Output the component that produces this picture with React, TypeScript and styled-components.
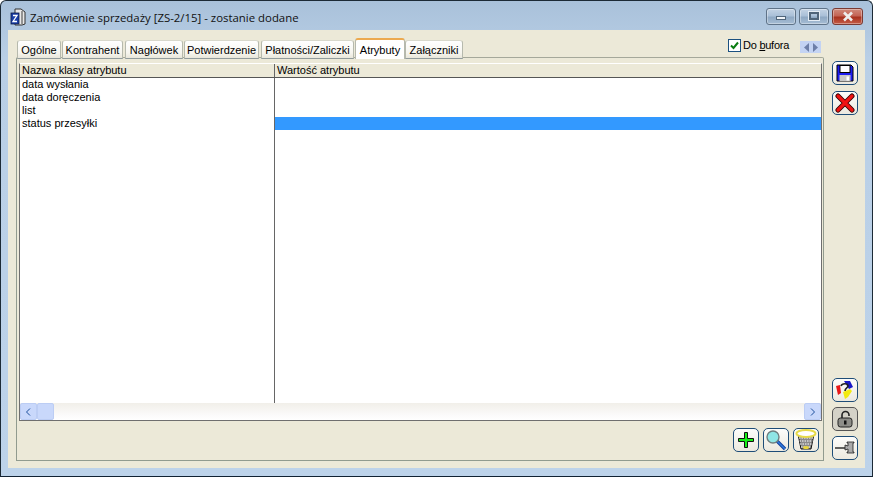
import React from "react";
import styled, { createGlobalStyle } from "styled-components";

const Global = createGlobalStyle`
  html, body { margin: 0; padding: 0; width: 873px; height: 477px; overflow: hidden; background: #fff; }
  * { box-sizing: border-box; }
`;

const Win = styled.div`
  width: 873px; height: 477px; display: flex; flex-direction: column;
  background: linear-gradient(180deg, #a9c1da 0%, #b9cfe6 12%, #bdd3ea 100%);
  border: 1px solid #1c2a36; border-bottom-color: #123; border-radius: 6px 6px 0 0;
  font-family: "Liberation Sans", Arial, sans-serif;
  font-size: 11px; color: #000;
`;
const TitleBar = styled.div`
  height: 29px; display: flex; align-items: center; padding: 3px 9px 0 9px; flex: none;
`;
const AppIcon = styled.svg` width: 16px; height: 18px; margin-right: 4px; flex: none; `;
const Title = styled.div`
  flex: 1; font-family: "Open Sans", sans-serif; font-size: 11.4px; color: #111; white-space: nowrap;
`;
const Caps = styled.div` display: flex; gap: 3px; margin-top: -2px; `;
const Cap = styled.div<{ $w: number; $close?: boolean }>`
  width: ${p => p.$w}px; height: 17px; border: 1px solid ${p => p.$close ? "#7a3a33" : "#5f7388"}; border-radius: 3px;
  display: flex; align-items: center; justify-content: center;
  background: ${p => p.$close
    ? "linear-gradient(180deg,#cf8a7c 0%,#c46455 45%,#a8321f 55%,#c55c46 100%)"
    : "linear-gradient(180deg,#c3d3e4 0%,#aac0d8 45%,#8fa9c4 55%,#a6bdd4 100%)"};
  box-shadow: inset 0 0 0 1px rgba(255,255,255,.35);
`;
const MinGlyph = styled.div` width: 10px; height: 4px; background: #f0f4f8; border: 1px solid #50657a; margin-top: 4px; `;
const MaxGlyph = styled.div` width: 10px; height: 8px; background: transparent; border: 2px solid #50657a; box-shadow: 0 0 0 1px #e5edf5; `;
const CloseGlyph = styled.svg` width: 14px; height: 11px; `;

const Client = styled.div`
  flex: 1; margin: 0 7px 8px 7px; background: #ece9d8; display: flex; min-height: 0;
`;
const Main = styled.div`
  width: 817px; flex: none; display: flex; flex-direction: column; padding: 8px 0 7px 8px;
`;
const TabRow = styled.div` height: 21px; display: flex; align-items: flex-end; flex: none; position: relative; z-index: 1; padding-left: 1px; `;
const Tab = styled.div<{ $w: number; $active?: boolean; $ml?: number }>`
  width: ${p => p.$w}px; margin-left: ${p => p.$ml ?? 0}px;
  height: ${p => p.$active ? 21 : 19}px; flex: none;
  display: flex; align-items: center; justify-content: center; white-space: nowrap;
  padding-top: ${p => p.$active ? 0 : 1}px;
  background: ${p => p.$active ? "#fff" : "linear-gradient(180deg,#fff 0%,#f6f5ee 70%,#e8e6da 100%)"};
  border: 1px solid #b6b9ad; border-bottom: ${p => p.$active ? "none" : "1px solid #919b9c"};
  border-top: ${p => p.$active ? "2px solid #eca94f" : "1px solid #d8d8cc"};
  border-radius: 3px 3px 0 0;
`;
const Spacer = styled.div` flex: 1; `;
const BufferBox = styled.div`
  display: flex; align-items: center; align-self: flex-start; margin-top: -1px; margin-right: 3px; gap: 2px;
`;
const Check = styled.div`
  width: 13px; height: 13px; border: 1px solid #1c5180; background: #fff;
  display: flex; align-items: center; justify-content: center;
`;
const BufferLabel = styled.span` width: 55px; white-space: nowrap; letter-spacing: -.25px; u { text-underline-offset: 1px; } `;
const Spin = styled.div`
  width: 21px; height: 12px; background: #c3d3f3; display: flex; align-items: center; justify-content: center; gap: 2px;
  margin-top: 4px; margin-right: 1px;
`;
const Panel = styled.div`
  flex: 1; margin-top: -2px; border: 1px solid #919b8f; border-top-color: #a5a89a;
  border-radius: 2px 2px 0 0; display: flex; flex-direction: column; padding: 5px 1px 0 2px; min-height: 0; width: 808px;
`;
const Grid = styled.div`
  width: 803px; height: 358px; flex: none; border: 1px solid #6f6f6f; border-top: 1px solid #fff;
  display: flex; flex-direction: column; background: #fff;
`;
const HeadRow = styled.div`
  height: 14px; flex: none; display: grid; grid-template-columns: 254px 1fr; background: #ece9d8;
  border-bottom: 1px solid #555;
`;
const HeadCell = styled.div`
  padding-left: 2px; line-height: 13px; font-size: 11px; white-space: nowrap;
  & + & { border-left: 1px solid #666; }
`;
const Body = styled.div` flex: 1; display: grid; grid-template-columns: 254px 1fr; min-height: 0; `;
const NameCol = styled.div` display: flex; flex-direction: column; `;
const ValueCol = styled.div` border-left: 1px solid #666; display: flex; flex-direction: column; `;
const Row = styled.div<{ $sel?: boolean }>`
  height: 13px; padding-left: 2px; line-height: 12px; white-space: nowrap; background: ${p => p.$sel ? "#3399ff" : "transparent"};
`;
const HScroll = styled.div`
  height: 17px; flex: none; display: flex; align-items: stretch; padding: 0;
  background: linear-gradient(180deg,#f1efe9 0%,#fbfafa 70%,#fff 100%);
`;
const ScrollBtn = styled.div`
  width: 17px; background: #c9d8fb; border: 1px solid #bccdf4; border-radius: 2px;
  display: flex; align-items: center; justify-content: center; flex: none;
`;
const Footer = styled.div`
  flex: 1; display: flex; justify-content: flex-end; align-items: flex-start; gap: 4px; padding: 7px 3px 0 0;
`;
const Btn = styled.div<{ $gray?: boolean; $mt?: number }>`
  width: 26px; height: 24px; flex: none; border: 1px solid #1e4d78; border-radius: 5px;
  margin-top: ${p => p.$mt ?? 0}px;
  background: ${p => p.$gray ? "#d4d2c8" : "linear-gradient(180deg,#fdfdfb 0%,#ece9df 100%)"};
  ${p => p.$gray ? "border-color:#555;" : ""}
  display: flex; align-items: center; justify-content: center;
`;
const Side = styled.div`
  flex: 1; display: flex; flex-direction: column; align-items: flex-start; padding: 31px 0 8px 7px; gap: 5px;
`;
const SideGap = styled.div` flex: 1; `;

const Arrow = ({ d }: { d: string }) => (
  <svg width="9" height="10" viewBox="0 0 9 10"><path d={d} fill="none" stroke="#1c4f9c" strokeWidth="1" /></svg>
);

export default function App() {
  return (
    <Win>
      <Global />
      <TitleBar>
        <AppIcon viewBox="0 0 16 18">
          <path d="M5 1h6l4 3v12l-3 1H5z" fill="#e8e8e8" stroke="#333" />
          <path d="M12 3v13" stroke="#777" strokeWidth="1.5" />
          <rect x="1" y="5" width="8" height="11" fill="#1b3fa8" stroke="#0c1a44" strokeWidth=".8" />
          <path d="M3 7.5h4L3 13.5h4" fill="none" stroke="#fff" strokeWidth="1.3" />
        </AppIcon>
        <Title>Zamówienie sprzedaży [ZS-2/15] - zostanie dodane</Title>
        <Caps>
          <Cap $w={30}><MinGlyph /></Cap>
          <Cap $w={30}><MaxGlyph /></Cap>
          <Cap $w={31} $close>
            <CloseGlyph viewBox="0 0 14 11"><path d="M3 1.5l8 8M11 1.5l-8 8" stroke="#eee" strokeWidth="2.6" /></CloseGlyph>
          </Cap>
        </Caps>
      </TitleBar>
      <Client>
        <Main>
          <TabRow>
            <Tab $w={44}>Ogólne</Tab>
            <Tab $w={61} $ml={1}>Kontrahent</Tab>
            <Tab $w={58} $ml={2}>Nagłówek</Tab>
            <Tab $w={75} $ml={1}>Potwierdzenie</Tab>
            <Tab $w={93} $ml={2}>Płatności/Zaliczki</Tab>
            <Tab $w={50} $ml={1} $active>Atrybuty</Tab>
            <Tab $w={58}>Załączniki</Tab>
            <Spacer />
            <BufferBox>
              <Check>
                <svg width="11" height="11" viewBox="0 0 11 11"><path d="M2 5.5l2.5 2.5L9 2.5" fill="none" stroke="#0a7d12" strokeWidth="2" /></svg>
              </Check>
              <BufferLabel>Do <u>b</u>ufora</BufferLabel>
              <Spin>
                <svg width="7" height="9" viewBox="0 0 7 9"><path d="M6 0v9L1 4.5z" fill="#6d7fa8" /></svg>
                <svg width="7" height="9" viewBox="0 0 7 9"><path d="M1 0v9l5-4.5z" fill="#6d7fa8" /></svg>
              </Spin>
            </BufferBox>
          </TabRow>
          <Panel>
            <Grid>
              <HeadRow>
                <HeadCell>Nazwa klasy atrybutu</HeadCell>
                <HeadCell>Wartość atrybutu</HeadCell>
              </HeadRow>
              <Body>
                <NameCol>
                  <Row>data wysłania</Row>
                  <Row>data doręczenia</Row>
                  <Row>list</Row>
                  <Row>status przesyłki</Row>
                </NameCol>
                <ValueCol>
                  <Row />
                  <Row />
                  <Row />
                  <Row $sel />
                </ValueCol>
              </Body>
              <HScroll>
                <ScrollBtn><Arrow d="M6 1.5L2.5 5 6 8.5" /></ScrollBtn>
                <ScrollBtn />
                <Spacer />
                <ScrollBtn><Arrow d="M3 1.5L6.5 5 3 8.5" /></ScrollBtn>
              </HScroll>
            </Grid>
            <Footer>
              <Btn>
                <svg width="20" height="20" viewBox="0 0 20 20"><path d="M8.5 2.5h3v6h6v3h-6v6h-3v-6h-6v-3h6z" fill="#17f017" stroke="#111" /></svg>
              </Btn>
              <Btn>
                <svg width="22" height="22" viewBox="0 0 22 22">
                  <path d="M12 12l8 8" stroke="#123f9a" strokeWidth="3.4" />
                  <path d="M12 12l8 8" stroke="#2f7ce0" strokeWidth="1.4" />
                  <circle cx="8" cy="8" r="6" fill="#8fe6e6" stroke="#6f7f80" strokeWidth="1.4" />
                </svg>
              </Btn>
              <Btn>
                <svg width="24" height="22" viewBox="0 0 24 22">
                  <path d="M4 5l3 15h10l3-15" fill="#8a8a8a" stroke="#111" />
                  <path d="M5 9l14 0M5.5 12h13M6 15h12M7 18h10" stroke="#fff" strokeWidth="1" strokeDasharray="1.5 1" />
                  <ellipse cx="12" cy="4.5" rx="9.5" ry="3.5" fill="#fff" stroke="#e6da4a" strokeWidth="2" />
                  <ellipse cx="12" cy="18.5" rx="3" ry="1.5" fill="#e9d63a" />
                </svg>
              </Btn>
            </Footer>
          </Panel>
        </Main>
        <Side>
          <Btn>
            <svg width="18" height="18" viewBox="0 0 18 18">
              <path d="M1 1h14l2 2v14H1z" fill="#1c1cf0" stroke="#000" />
              <rect x="4" y="1.5" width="10" height="7" fill="#fff" stroke="#000" />
              <rect x="3.5" y="11" width="11" height="6" fill="#c6c6c6" />
              <rect x="10.5" y="12.5" width="2.5" height="4" fill="#fff" />
            </svg>
          </Btn>
          <Btn $mt={1}>
            <svg width="20" height="20" viewBox="0 0 20 20"><path d="M3 3l14 14M17 3L3 17" stroke="#300" strokeWidth="5" strokeLinecap="round" /><path d="M3 3l14 14M17 3L3 17" stroke="#f01414" strokeWidth="3.2" strokeLinecap="round" /></svg>
          </Btn>
          <SideGap />
          <Btn>
            <svg width="20" height="20" viewBox="0 0 20 20">
              <path d="M1 6l4-1 1 8-3 2z" fill="#e81818" />
              <path d="M9 1h6l3 6-4 2z" fill="#1818c8" />
              <path d="M8 12l7-3 2 2-4 6-3 2z" fill="#f2ea10" />
              <path d="M6 6c1-3 7-3 7 0 0 2-3 2-3 5" fill="none" stroke="#222" strokeWidth="1.6" />
            </svg>
          </Btn>
          <Btn $gray>
            <svg width="20" height="20" viewBox="0 0 20 20">
              <path d="M7 9V6a3.5 3.5 0 0 1 7 0v1" fill="none" stroke="#222" strokeWidth="1.6" />
              <rect x="3" y="9" width="14" height="9" rx="2.5" fill="#8d8d88" stroke="#222" />
              <rect x="9" y="11.5" width="2.5" height="4" fill="#111" />
            </svg>
          </Btn>
          <Btn>
            <svg width="22" height="18" viewBox="0 0 22 18">
              <path d="M1 9h11" stroke="#222" strokeWidth="1.4" />
              <path d="M11 6l3 1V4h-1V3h7v1h-1v9h1v1h-7v-1h1v-3l-3 1z" fill="#aaa" stroke="#222" strokeWidth=".8" />
            </svg>
          </Btn>
        </Side>
      </Client>
    </Win>
  );
}
